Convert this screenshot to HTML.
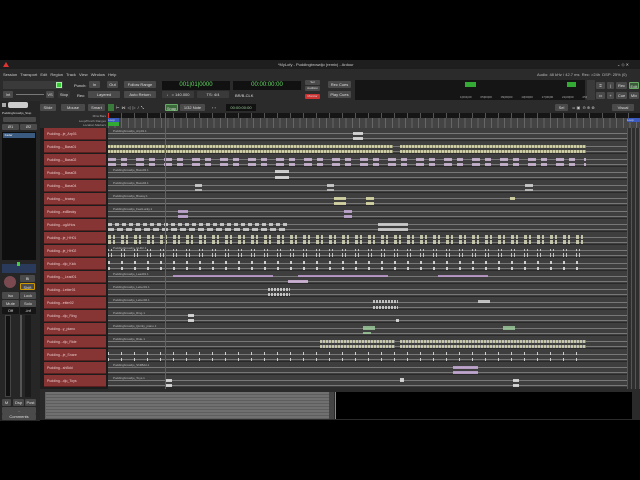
<!DOCTYPE html>
<html><head><meta charset="utf-8"><style>
*{margin:0;padding:0;box-sizing:border-box}
body{width:640px;height:480px;background:#000;position:relative;overflow:hidden;font-family:"Liberation Sans",sans-serif;color:#ddd}
.a{position:absolute}
.t{font-size:4px;white-space:nowrap}
.btn{position:absolute;background:#4a4a4a;border-radius:1px;font-size:4px;color:#ddd;text-align:center;line-height:7px;height:7px}
.hd{position:absolute;left:44px;width:62px;height:12px;background:#863434;border-bottom:1px solid #5a2020}
.hd span{position:absolute;left:3px;top:4px;font-size:3.5px;color:#e8c8c8}
.hd i{position:absolute;top:3px;width:6px;height:6px;background:#5a4a4a;font-style:normal;font-size:3px;text-align:center;line-height:6px;color:#eee}
.ln{position:absolute;left:108px;width:519px;height:13px;background:#3e3e3e;border-bottom:1px solid #2a2a2a}
.ln:before{content:"";position:absolute;left:0;right:0;top:5px;height:1px;background:#777}
.ln:after{content:"";position:absolute;left:0;right:0;top:10px;height:1px;background:#777}
.ln b{position:absolute;height:2px;z-index:2;opacity:.8}
.ln span{position:absolute;left:5px;top:1px;font-size:3px;color:#bbb;z-index:3}
</style></head><body>
<div class="a" style="left:0;top:60px;width:640px;height:360px;background:#2b2b2b"></div>
<div class="a" style="left:0;top:60px;width:640px;height:9px;background:#1e1e1e"></div>
<div class="a" style="left:3px;top:62px;width:0;height:0;border-left:3px solid transparent;border-right:3px solid transparent;border-bottom:5px solid #d33"></div>
<div class="a t" style="left:278px;top:62px;color:#ccc">*MyLofy - Puddingbrowdjo (remix) - Ardour</div>
<div class="a t" style="left:617px;top:62px;color:#ccc">⌄ ◇ ✕</div>
<div class="a t" style="left:3px;top:72px;color:#ccc;word-spacing:2px">Session Transport Edit Region Track View Window Help</div>
<div class="a t" style="left:537px;top:72px;color:#bbb">Audio: 48 kHz / 42.7 ms &nbsp;Rec: &gt;24h &nbsp;DSP: 25% (0)</div>
<div class="a" style="left:3px;top:81px;width:60px;height:8px;background:#3a3a3a"></div>
<div class="a" style="left:56px;top:82px;width:6px;height:6px;background:#3c3;border:1px solid #aea"></div>
<div class="btn" style="left:3px;top:91px;width:10px">Int</div>
<div class="a" style="left:16px;top:94px;width:28px;height:1px;background:#777"></div>
<div class="btn" style="left:46px;top:91px;width:8px">VS</div>
<div class="btn" style="left:58px;top:91px;width:12px;background:#333">Stop</div>
<div class="a t" style="left:74px;top:83px">Punch:</div><div class="btn" style="left:89px;top:81px;width:11px">In</div><div class="btn" style="left:107px;top:81px;width:11px">Out</div>
<div class="a t" style="left:77px;top:93px">Rec:</div><div class="btn" style="left:88px;top:91px;width:32px">Layered</div>
<div class="btn" style="left:124px;top:81px;width:32px">Follow Range</div>
<div class="btn" style="left:124px;top:91px;width:32px">Auto Return</div>
<div class="a" style="left:162px;top:81px;width:68px;height:9px;background:#111;color:#6d6;font-size:6px;text-align:center;line-height:9px">001|01|0000</div>
<div class="btn" style="left:162px;top:91px;width:32px;background:#3a3a3a">♩ = 140.000</div>
<div class="btn" style="left:197px;top:91px;width:32px;background:#3a3a3a">TS: 4/4</div>
<div class="a" style="left:233px;top:81px;width:68px;height:9px;background:#111;color:#6d6;font-size:6px;text-align:center;line-height:9px">00:00:00:00</div>
<div class="a t" style="left:235px;top:93px">BR/B-CLK</div>
<div class="btn" style="left:305px;top:80px;width:15px;height:5px;line-height:5px;font-size:3px">Sol</div>
<div class="btn" style="left:305px;top:86px;width:15px;height:5px;line-height:5px;font-size:3px">Audition</div>
<div class="btn" style="left:305px;top:94px;width:15px;height:5px;line-height:5px;font-size:3px;background:#c33">Monitor</div>
<div class="btn" style="left:328px;top:81px;width:23px">Rec Cues</div>
<div class="btn" style="left:328px;top:91px;width:23px">Play Cues</div>
<div class="a" style="left:355px;top:80px;width:230px;height:20px;background:#151515"></div>
<div class="a" style="left:465px;top:82px;width:11px;height:5px;background:#3a3"></div>
<div class="a" style="left:567px;top:82px;width:9px;height:5px;background:#3a3"></div>
<div class="a t" style="left:460px;top:95px;color:#aaa;font-size:3px;word-spacing:8px">1|001|00 05|00|00 09|00|00 13|00|00 17|00|00 21|00|00 25|00|00</div>
<div class="a" style="left:587px;top:80px;width:8px;height:20px;background:#3a3a3a"></div>
<div class="btn" style="left:596px;top:82px;width:9px">⌗</div><div class="btn" style="left:607px;top:82px;width:7px">|</div>
<div class="btn" style="left:616px;top:82px;width:11px">Rec</div><div class="btn" style="left:629px;top:82px;width:10px;background:#3a5a3a;border:1px solid #6a6">Edit</div>
<div class="btn" style="left:596px;top:92px;width:9px">▭</div><div class="btn" style="left:607px;top:92px;width:7px">+</div>
<div class="btn" style="left:616px;top:92px;width:11px">Cue</div><div class="btn" style="left:629px;top:92px;width:10px">Mix</div>
<div class="btn" style="left:40px;top:104px;width:16px">Slide</div>
<div class="btn" style="left:61px;top:104px;width:24px">Mouse</div>
<div class="btn" style="left:88px;top:104px;width:17px">Smart</div>
<div class="a" style="left:108px;top:104px;width:6px;height:7px;background:#3a7a3a"></div>
<div class="a t" style="left:116px;top:105px;color:#ccc;letter-spacing:2px">⊢⋈◁▷/⤡</div>
<div class="btn" style="left:165px;top:104px;width:13px;background:#3a6a3a;border:1px solid #6a6">Snap</div>
<div class="btn" style="left:180px;top:104px;width:25px">1/32 Note</div>
<div class="a t" style="left:212px;top:105px">‹ ›</div>
<div class="a" style="left:226px;top:104px;width:30px;height:7px;background:#111;font-size:4px;color:#9c9;line-height:7px;text-align:center">00:00:00:00</div>
<div class="btn" style="left:555px;top:104px;width:13px">Sel</div>
<div class="a t" style="left:572px;top:105px;color:#ccc">⋍ ▣ &nbsp;⊖ ⊕ ⊗</div>
<div class="btn" style="left:612px;top:104px;width:22px">Visual</div>
<div class="a" style="left:0;top:101px;width:40px;height:320px;background:#262626"></div>
<div class="a" style="left:2px;top:103px;width:4px;height:4px;background:#aaa"></div>
<div class="a" style="left:8px;top:102px;width:20px;height:6px;background:#ccc;border-radius:2px"></div>
<div class="a t" style="left:2px;top:111px;font-size:3px">Puddingbrowdjo_Stup</div>
<div class="btn" style="left:3px;top:117px;width:33px;height:5px"></div>
<div class="btn" style="left:2px;top:124px;width:17px;height:6px;line-height:6px">Ø1</div>
<div class="btn" style="left:20px;top:124px;width:17px;height:6px;line-height:6px">Ø2</div>
<div class="a" style="left:2px;top:132px;width:34px;height:128px;background:#0e0e0e"></div>
<div class="a t" style="left:3px;top:133px;width:32px;height:5px;background:#3a5a80;font-size:3px;color:#fff">&nbsp;&nbsp;Fader</div>
<div class="a" style="left:2px;top:264px;width:34px;height:9px;background:#2a3a5a"></div>
<div class="a" style="left:17px;top:262px;width:3px;height:4px;background:#4c4"></div>
<div class="a" style="left:4px;top:276px;width:12px;height:12px;border-radius:50%;background:#7a4a50"></div>
<div class="btn" style="left:20px;top:275px;width:15px">Bi</div>
<div class="btn" style="left:20px;top:283px;width:15px;border:1px solid #c90">Shift</div>
<div class="btn" style="left:2px;top:292px;width:17px">Iso</div><div class="btn" style="left:20px;top:292px;width:16px">Lock</div>
<div class="btn" style="left:2px;top:300px;width:17px">Mute</div><div class="btn" style="left:20px;top:300px;width:16px">Solo</div>
<div class="btn" style="left:2px;top:307px;width:17px;background:#151515">Off</div><div class="btn" style="left:20px;top:307px;width:16px;background:#151515">-inf</div>
<div class="a" style="left:5px;top:315px;width:6px;height:82px;background:#111;border:1px solid #444"></div>
<div class="a" style="left:20px;top:315px;width:2px;height:82px;background:#555"></div>
<div class="a" style="left:25px;top:315px;width:6px;height:82px;background:#1a1a1a"></div>
<div class="btn" style="left:2px;top:399px;width:9px">M</div><div class="btn" style="left:13px;top:399px;width:11px">Dsp</div><div class="btn" style="left:25px;top:399px;width:11px">Post</div>
<div class="btn" style="left:2px;top:407px;width:34px">-</div>
<div class="btn" style="left:2px;top:414px;width:34px;height:6px;line-height:6px">Comments</div>
<div class="a t" style="left:76px;top:114px;font-size:3px;color:#aaa;text-align:right;width:30px;line-height:4.5px">Mins:Bars<br>Loop/Punch Ranges<br>Location Markers</div>
<div class="a" style="left:108px;top:113px;width:532px;height:5px;background:#151515;background-image:repeating-linear-gradient(90deg,#555 0 1px,transparent 1px 13px)"></div>
<div class="a" style="left:108px;top:118px;width:532px;height:10px;background:#444;background-image:repeating-linear-gradient(90deg,#666 0 1px,transparent 1px 6.6px)"></div>
<div class="a" style="left:108px;top:118px;width:11px;height:4px;background:#3a5ac0;font-size:3px;line-height:4px">Loop</div>
<div class="a" style="left:108px;top:122px;width:11px;height:4px;background:#3a3"></div>
<div class="a" style="left:627px;top:118px;width:13px;height:4px;background:#3a5ac0;font-size:3px;line-height:4px">Loop</div>
<div class="a" style="left:627px;top:128px;width:13px;height:262px;background:#2e2e2e;background-image:repeating-linear-gradient(90deg,#555 0 1px,transparent 1px 4px)"></div>
<div class="a" style="left:40px;top:128px;width:68px;height:262px;background:#1d1d1d"></div>

<div class="hd" style="top:128px"><span>Pudding...je_Arp01</span><i style="left:79px">○</i><i style="left:87px">M</i><i style="left:95px">S</i></div>
<div class="hd" style="top:141px"><span>Pudding..._Bass01</span><i style="left:79px">○</i><i style="left:87px">M</i><i style="left:95px">S</i></div>
<div class="hd" style="top:154px"><span>Pudding..._Bass02</span><i style="left:79px">○</i><i style="left:87px">M</i><i style="left:95px">S</i></div>
<div class="hd" style="top:167px"><span>Pudding..._Bass03</span><i style="left:79px">○</i><i style="left:87px">M</i><i style="left:95px">S</i></div>
<div class="hd" style="top:180px"><span>Pudding..._Bass04</span><i style="left:79px">○</i><i style="left:87px">M</i><i style="left:95px">S</i></div>
<div class="hd" style="top:193px"><span>Pudding..._brassy</span><i style="left:79px">○</i><i style="left:87px">M</i><i style="left:95px">S</i></div>
<div class="hd" style="top:206px"><span>Pudding...edBecky</span><i style="left:79px">○</i><i style="left:87px">M</i><i style="left:95px">S</i></div>
<div class="hd" style="top:219px"><span>Pudding...ugAHos</span><i style="left:79px">○</i><i style="left:87px">M</i><i style="left:95px">S</i></div>
<div class="hd" style="top:232px"><span>Pudding...je_HH01</span><i style="left:79px">○</i><i style="left:87px">M</i><i style="left:95px">S</i></div>
<div class="hd" style="top:245px"><span>Pudding...je_HH02</span><i style="left:79px">○</i><i style="left:87px">M</i><i style="left:95px">S</i></div>
<div class="hd" style="top:258px"><span>Pudding...djo_Kick</span><i style="left:79px">○</i><i style="left:87px">M</i><i style="left:95px">S</i></div>
<div class="hd" style="top:271px"><span>Pudding..._Lead01</span><i style="left:79px">○</i><i style="left:87px">M</i><i style="left:95px">S</i></div>
<div class="hd" style="top:284px"><span>Pudding...Letter01</span><i style="left:79px">○</i><i style="left:87px">M</i><i style="left:95px">S</i></div>
<div class="hd" style="top:297px"><span>Pudding...etter02</span><i style="left:79px">○</i><i style="left:87px">M</i><i style="left:95px">S</i></div>
<div class="hd" style="top:310px"><span>Pudding...djo_Ring</span><i style="left:79px">○</i><i style="left:87px">M</i><i style="left:95px">S</i></div>
<div class="hd" style="top:323px"><span>Pudding...y_piano</span><i style="left:79px">○</i><i style="left:87px">M</i><i style="left:95px">S</i></div>
<div class="hd" style="top:336px"><span>Pudding...djo_Ride</span><i style="left:79px">○</i><i style="left:87px">M</i><i style="left:95px">S</i></div>
<div class="hd" style="top:349px"><span>Pudding...je_Snare</span><i style="left:79px">○</i><i style="left:87px">M</i><i style="left:95px">S</i></div>
<div class="hd" style="top:362px"><span>Pudding...shBdd</span><i style="left:79px">○</i><i style="left:87px">M</i><i style="left:95px">S</i></div>
<div class="hd" style="top:375px"><span>Pudding...djo_Toys</span><i style="left:79px">○</i><i style="left:87px">M</i><i style="left:95px">S</i></div>

<div class="ln" style="top:128px"><span>Puddingbrowdjo_Arp01.1</span><b style="left:245px;width:10px;top:4px;background:#eee;height:3px"></b><b style="left:245px;width:10px;top:9px;background:#eee;height:3px"></b></div>
<div class="ln" style="top:141px"><b style="left:0;width:285px;top:4px;height:3px;background:repeating-linear-gradient(90deg,#e8e8b8 0 2px,#9a9a70 2px 3px)"></b><b style="left:0;width:285px;top:9px;height:3px;background:repeating-linear-gradient(90deg,#e8e8b8 0 2px,#9a9a70 2px 3px)"></b><b style="left:292px;width:186px;top:4px;height:3px;background:repeating-linear-gradient(90deg,#e8e8b8 0 2px,#9a9a70 2px 3px)"></b><b style="left:292px;width:186px;top:9px;height:3px;background:repeating-linear-gradient(90deg,#e8e8b8 0 2px,#9a9a70 2px 3px)"></b></div>
<div class="ln" style="top:154px"><b style="left:0;width:478px;top:4px;height:3px;background:repeating-linear-gradient(90deg,#d8c0e0 0 8px,transparent 8px 13px,#d8c0e0 13px 19px,transparent 19px 28px)"></b><b style="left:0;width:478px;top:9px;height:3px;background:repeating-linear-gradient(90deg,#d8c0e0 0 8px,transparent 8px 13px,#d8c0e0 13px 19px,transparent 19px 28px)"></b></div>
<div class="ln" style="top:167px"><span>Puddingbrowdjo_Bass03.1</span><b style="left:167px;width:14px;top:3px;background:#eee;height:3px"></b><b style="left:167px;width:14px;top:9px;background:#eee;height:3px"></b></div>
<div class="ln" style="top:180px"><span>Puddingbrowdjo_Bass04.1</span><b style="left:87px;width:7px;top:4px;background:#ddd;height:3px"></b><b style="left:219px;width:7px;top:4px;background:#ddd;height:3px"></b><b style="left:417px;width:8px;top:4px;background:#ddd;height:3px"></b><b style="left:87px;width:7px;top:9px;background:#ccc;height:2px"></b><b style="left:219px;width:7px;top:9px;background:#ccc;height:2px"></b><b style="left:417px;width:8px;top:9px;background:#ccc;height:2px"></b></div>
<div class="ln" style="top:193px"><span>Puddingbrowdjo_Brassy.1</span><b style="left:226px;width:12px;top:4px;background:#e8e8b0;height:3px"></b><b style="left:258px;width:8px;top:4px;background:#e8e8b0;height:3px"></b><b style="left:402px;width:5px;top:4px;background:#e8e8b0;height:3px"></b><b style="left:226px;width:12px;top:9px;background:#e8e8b0;height:3px"></b><b style="left:258px;width:8px;top:9px;background:#e8e8b0;height:3px"></b></div>
<div class="ln" style="top:206px"><span>Puddingbrowdjo_FeelLucky.1</span><b style="left:70px;width:10px;top:4px;background:#d0b0e0;height:3px"></b><b style="left:236px;width:8px;top:4px;background:#d0b0e0;height:3px"></b><b style="left:70px;width:10px;top:9px;background:#d0b0e0;height:3px"></b><b style="left:236px;width:8px;top:9px;background:#d0b0e0;height:3px"></b></div>
<div class="ln" style="top:219px"><b style="left:0;width:180px;top:4px;height:3px;background:repeating-linear-gradient(90deg,#ddd 0 4px,transparent 4px 7px)"></b><b style="left:0;width:180px;top:9px;height:3px;background:repeating-linear-gradient(90deg,#ddd 0 6px,transparent 6px 9px)"></b><b style="left:270px;width:30px;top:4px;height:3px;background:#ddd"></b><b style="left:270px;width:30px;top:9px;height:3px;background:#ddd"></b></div>
<div class="ln" style="top:232px"><b style="left:0;width:478px;top:3px;height:4px;background:repeating-linear-gradient(90deg,#e0e0c0 0 3px,transparent 3px 5px,#e0e0c0 5px 7px,transparent 7px 13px)"></b><b style="left:0;width:478px;top:8px;height:4px;background:repeating-linear-gradient(90deg,#e0e0c0 0 3px,transparent 3px 5px,#e0e0c0 5px 7px,transparent 7px 13px)"></b></div>
<div class="ln" style="top:245px"><span>Puddingbrowdjo_HH02.1</span><b style="left:0;width:478px;top:8px;height:4px;background:repeating-linear-gradient(90deg,#ddd 0 1px,transparent 1px 3px,#ddd 3px 4px,transparent 4px 13px)"></b><b style="left:0;width:478px;top:4px;height:2px;background:repeating-linear-gradient(90deg,#ddd 0 1px,transparent 1px 3px,#ddd 3px 4px,transparent 4px 13px)"></b></div>
<div class="ln" style="top:258px"><b style="left:0;width:478px;top:3px;height:3px;background:repeating-linear-gradient(90deg,#eee 0 2px,transparent 2px 13px)"></b><b style="left:0;width:478px;top:9px;height:3px;background:repeating-linear-gradient(90deg,#eee 0 2px,transparent 2px 13px)"></b></div>
<div class="ln" style="top:271px"><span>Puddingbrowdjo_Lead01.1</span><b style="left:65px;width:100px;top:4px;height:2px;background:#c8a0d8"></b><b style="left:190px;width:90px;top:4px;height:2px;background:#c8a0d8"></b><b style="left:330px;width:50px;top:4px;height:2px;background:#c8a0d8"></b><b style="left:180px;width:20px;top:9px;height:3px;background:#e0c0e8"></b></div>
<div class="ln" style="top:284px"><span>Puddingbrowdjo_Letter01.1</span><b style="left:160px;width:22px;top:4px;height:3px;background:repeating-linear-gradient(90deg,#ddd 0 2px,transparent 2px 3px)"></b><b style="left:160px;width:22px;top:9px;height:3px;background:repeating-linear-gradient(90deg,#ddd 0 2px,transparent 2px 3px)"></b></div>
<div class="ln" style="top:297px"><span>Puddingbrowdjo_Letter02.1</span><b style="left:265px;width:25px;top:3px;height:3px;background:repeating-linear-gradient(90deg,#ddd 0 2px,transparent 2px 3px)"></b><b style="left:265px;width:25px;top:9px;height:3px;background:repeating-linear-gradient(90deg,#ddd 0 2px,transparent 2px 3px)"></b><b style="left:370px;width:12px;top:3px;height:3px;background:#ddd"></b></div>
<div class="ln" style="top:310px"><span>Puddingbrowdjo_Ring.1</span><b style="left:80px;width:6px;top:4px;height:3px;background:#eee"></b><b style="left:80px;width:6px;top:9px;height:3px;background:#eee"></b><b style="left:288px;width:3px;top:9px;height:3px;background:#eee"></b></div>
<div class="ln" style="top:323px"><span>Puddingbrowdjo_Quirky_piano.1</span><b style="left:255px;width:12px;top:3px;height:4px;background:#a0d0a0"></b><b style="left:395px;width:12px;top:3px;height:4px;background:#a0d0a0"></b><b style="left:255px;width:8px;top:9px;height:2px;background:#a0d0a0"></b></div>
<div class="ln" style="top:336px"><span>Puddingbrowdjo_Ride.1</span><b style="left:212px;width:75px;top:4px;height:3px;background:repeating-linear-gradient(90deg,#e0e0c0 0 2px,#888 2px 3px)"></b><b style="left:212px;width:75px;top:9px;height:3px;background:repeating-linear-gradient(90deg,#e0e0c0 0 2px,#888 2px 3px)"></b><b style="left:292px;width:186px;top:4px;height:3px;background:repeating-linear-gradient(90deg,#e0e0c0 0 2px,#888 2px 3px)"></b><b style="left:292px;width:186px;top:9px;height:3px;background:repeating-linear-gradient(90deg,#e0e0c0 0 2px,#888 2px 3px)"></b></div>
<div class="ln" style="top:349px"><b style="left:0;width:478px;top:3px;height:3px;background:repeating-linear-gradient(90deg,#eee 0 1px,transparent 1px 13px)"></b><b style="left:0;width:478px;top:9px;height:3px;background:repeating-linear-gradient(90deg,#eee 0 1px,transparent 1px 13px)"></b></div>
<div class="ln" style="top:362px"><span>Puddingbrowdjo_ShitBdd.1</span><b style="left:345px;width:25px;top:4px;height:3px;background:#d0b0e0"></b><b style="left:345px;width:25px;top:9px;height:3px;background:#d0b0e0"></b></div>
<div class="ln" style="top:375px"><span>Puddingbrowdjo_Toys.1</span><b style="left:58px;width:6px;top:4px;height:3px;background:#eee"></b><b style="left:58px;width:6px;top:9px;height:3px;background:#eee"></b><b style="left:292px;width:4px;top:3px;height:4px;background:#eee"></b><b style="left:405px;width:6px;top:4px;height:3px;background:#eee"></b><b style="left:405px;width:6px;top:9px;height:3px;background:#eee"></b></div>
<div class="a" style="left:165px;top:113px;width:1px;height:276px;background:#5a5aa0;z-index:5"></div>
<div class="a" style="left:108px;top:113px;width:1px;height:5px;background:#e33"></div>
<div class="a" style="left:40px;top:389px;width:600px;height:31px;background:#2a2a2a"></div>
<div class="a" style="left:45px;top:392px;width:284px;height:27px;background:#6a6a6a;background-image:repeating-linear-gradient(0deg,#5e5e5e 0 1px,#707070 1px 3px);border-left:1px solid #a44"></div>
<div class="a" style="left:329px;top:392px;width:5px;height:27px;background:#444"></div>
<div class="a" style="left:335px;top:392px;width:297px;height:27px;background:#000;border-left:1px solid #888"></div>
</body></html>
